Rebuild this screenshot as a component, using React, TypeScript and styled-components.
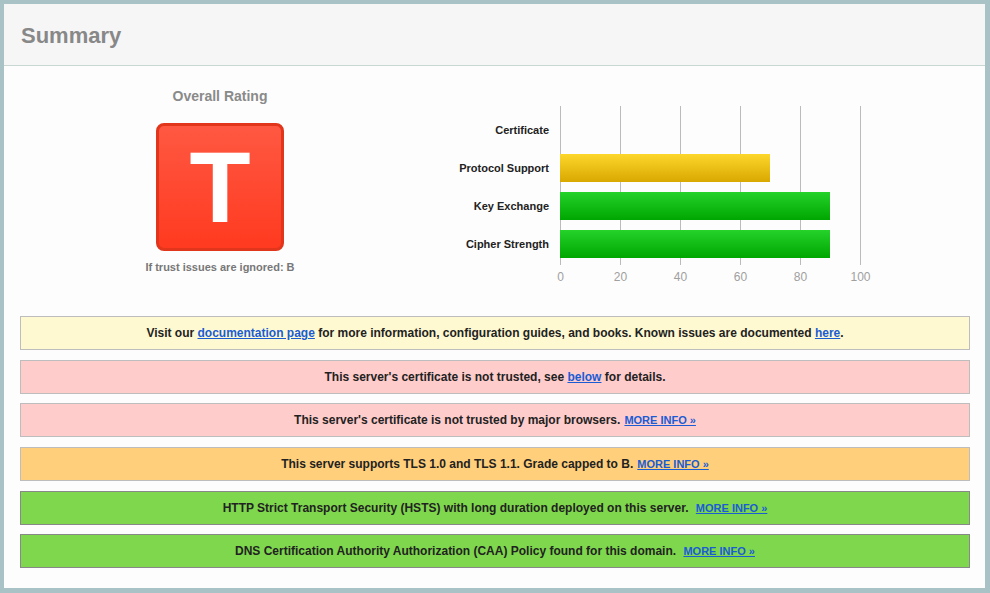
import React from "react";
import styled, { createGlobalStyle } from "styled-components";

const Global = createGlobalStyle`
  html, body { margin: 0; padding: 0; }
  body {
    background: #a8c2c5;
    font-family: "Liberation Sans", Arial, sans-serif;
    width: 990px;
    height: 593px;
    overflow: hidden;
  }
`;

const Panel = styled.div`
  margin: 4px 5px 5px 4px;
  width: 981px;
  height: 584px;
  background: #fdfdfd;
  display: flex;
  flex-direction: column;
`;

const Header = styled.div`
  height: 62px;
  flex-shrink: 0;
  background: #f6f6f6;
  border-bottom: 1px solid #c8d6d4;
  display: flex;
  align-items: center;
  padding-left: 17px;
  padding-top: 2px;
  box-sizing: border-box;
`;

const Title = styled.h1`
  margin: 0;
  font-size: 22px;
  font-weight: bold;
  color: #888888;
`;

const Top = styled.div`
  display: flex;
  height: 250px;
  flex-shrink: 0;
`;

const RatingCol = styled.div`
  width: 432px;
  display: flex;
  flex-direction: column;
  align-items: center;
  padding-top: 22px;
  box-sizing: border-box;
`;

const RatingLabel = styled.div`
  font-size: 14px;
  line-height: 16px;
  font-weight: bold;
  color: #8a8a8a;
`;

const GradeBox = styled.div`
  margin-top: 19px;
  width: 128px;
  height: 128px;
  box-sizing: border-box;
  border: 3px solid #e2361c;
  border-radius: 8px;
  background: linear-gradient(to bottom, #ff5842, #ff3a20);
  display: flex;
  align-items: center;
  justify-content: center;
  color: #ffffff;
  font-size: 100px;
  font-weight: bold;
  line-height: 1;
`;

const TrustNote = styled.div`
  margin-top: 10px;
  font-size: 11px;
  font-weight: bold;
  color: #777777;
`;

const ChartCol = styled.div`
  padding-top: 40px;
  display: flex;
  flex-direction: column;
`;

const ChartBody = styled.div`
  display: flex;
`;

const Labels = styled.div`
  width: 113px;
  padding-top: 5px;
  padding-right: 11px;
  display: flex;
  flex-direction: column;
  align-items: flex-end;
`;

const Label = styled.div`
  height: 38px;
  display: flex;
  align-items: center;
  font-size: 11px;
  font-weight: bold;
  color: #222222;
  white-space: nowrap;
`;

const Plot = styled.div`
  width: 301px;
  padding-top: 5px;
  padding-bottom: 2px;
  background-image: repeating-linear-gradient(
    to right,
    #bbbbbb 0px,
    #bbbbbb 1px,
    transparent 1px,
    transparent 60px
  );
`;

const BarRow = styled.div`
  height: 38px;
  display: flex;
  align-items: center;
`;

const Bar = styled.div<{ $kind: "yellow" | "green" }>`
  height: 28px;
  background: ${(p) =>
    p.$kind === "yellow"
      ? "linear-gradient(to bottom, #fdd72c, #d9a800)"
      : "linear-gradient(to bottom, #24d22a, #00a600)"};
`;

const Axis = styled.div`
  margin-left: 124px;
  margin-top: 2px;
  display: flex;
  height: 20px;
  align-items: center;
  width: 301px;
  position: relative;
`;

const Tick = styled.span`
  position: absolute;
  transform: translateX(-50%);
  font-size: 12px;
  color: #a0a0a0;
`;

const Alerts = styled.div`
  padding: 0 15px 0 16px;
  display: flex;
  flex-direction: column;
  gap: 9.7px;
`;

const tones = {
  info: { bg: "#fff9d1", border: "#bdbdbd" },
  error: { bg: "#ffcccc", border: "#bdbdbd" },
  warning: { bg: "#ffcf7b", border: "#bdbdbd" },
  good: { bg: "#7ed74c", border: "#888888" },
};

const Alert = styled.div<{ $tone: keyof typeof tones }>`
  height: 34px;
  box-sizing: border-box;
  background: ${(p) => tones[p.$tone].bg};
  border: 1px solid ${(p) => tones[p.$tone].border};
  display: flex;
  align-items: center;
  justify-content: center;
  font-size: 12px;
  font-weight: bold;
  color: #222222;
  white-space: pre;
`;

const Link = styled.a`
  color: #1a5cd4;
  text-decoration: underline;
  cursor: pointer;
`;

const More = styled(Link)`
  font-size: 11px;
  margin-left: 4px;
`;

const bars: { label: string; value: number; kind?: "yellow" | "green" }[] = [
  { label: "Certificate", value: 0 },
  { label: "Protocol Support", value: 70, kind: "yellow" },
  { label: "Key Exchange", value: 90, kind: "green" },
  { label: "Cipher Strength", value: 90, kind: "green" },
];

export default function App() {
  return (
    <>
      <Global />
      <Panel>
        <Header>
          <Title>Summary</Title>
        </Header>
        <Top>
          <RatingCol>
            <RatingLabel>Overall Rating</RatingLabel>
            <GradeBox>T</GradeBox>
            <TrustNote>If trust issues are ignored: B</TrustNote>
          </RatingCol>
          <ChartCol>
            <ChartBody>
              <Labels>
                {bars.map((b) => (
                  <Label key={b.label}>{b.label}</Label>
                ))}
              </Labels>
              <Plot>
                {bars.map((b) => (
                  <BarRow key={b.label}>
                    {b.kind && <Bar $kind={b.kind} style={{ width: b.value * 3 }} />}
                  </BarRow>
                ))}
              </Plot>
            </ChartBody>
            <Axis>
              {[0, 20, 40, 60, 80, 100].map((t) => (
                <Tick key={t} style={{ left: t * 3 + 0.5 }}>
                  {t}
                </Tick>
              ))}
            </Axis>
          </ChartCol>
        </Top>
        <Alerts>
          <Alert $tone="info">
            Visit our <Link>documentation page</Link> for more information, configuration guides, and books. Known issues are documented <Link>here</Link>.
          </Alert>
          <Alert $tone="error">
            This server's certificate is not trusted, see <Link>below</Link> for details.
          </Alert>
          <Alert $tone="error">
            This server's certificate is not trusted by major browsers.<More>MORE INFO »</More>
          </Alert>
          <Alert $tone="warning">
            This server supports TLS 1.0 and TLS 1.1. Grade capped to B.<More>MORE INFO »</More>
          </Alert>
          <Alert $tone="good">
            HTTP Strict Transport Security (HSTS) with long duration deployed on this server. <More>MORE INFO »</More>
          </Alert>
          <Alert $tone="good">
            DNS Certification Authority Authorization (CAA) Policy found for this domain. <More>MORE INFO »</More>
          </Alert>
        </Alerts>
      </Panel>
    </>
  );
}
